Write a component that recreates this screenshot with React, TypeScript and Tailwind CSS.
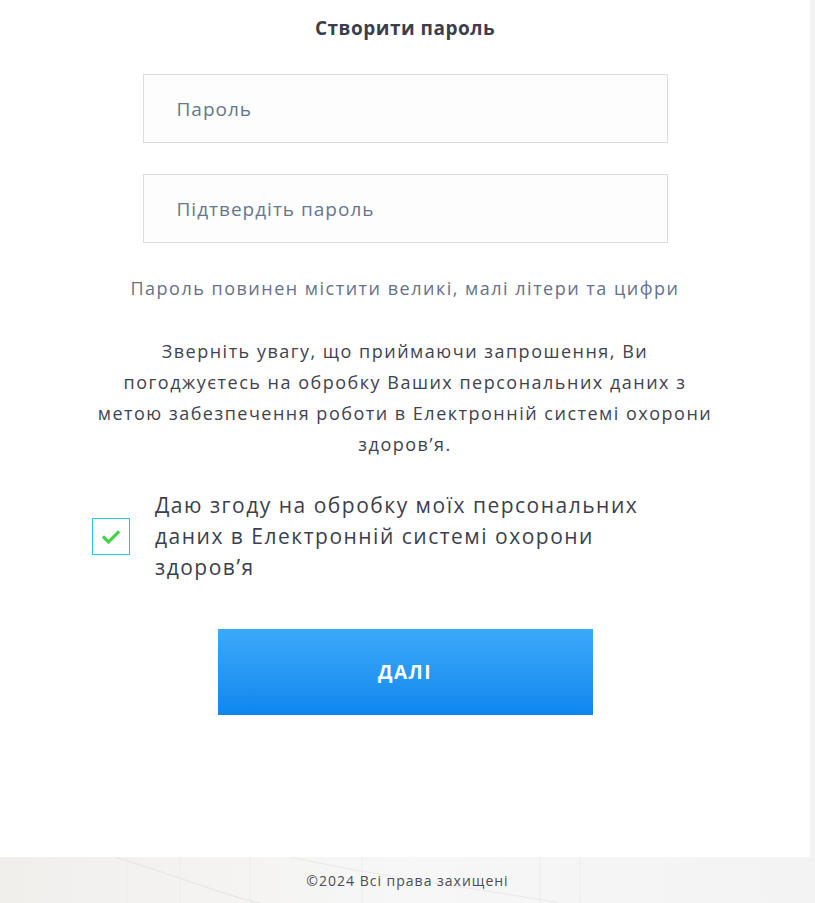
import { useState } from 'react';

const font = { fontFamily: '"Open Sans", Lato, sans-serif' };

function CheckIcon() {
  return (
    <svg width="18" height="14" viewBox="0 0 18 14" fill="none" aria-hidden="true">
      <path d="M2 7.5l4.5 4.5L16 2.5" stroke="#46d24b" strokeWidth="3.2" strokeLinecap="square" />
    </svg>
  );
}

export default function App() {
  const [agreed, setAgreed] = useState(true);

  return (
    <div className="flex min-h-[903px] w-[815px] flex-col bg-[#f3f3f3]" style={font}>
      {/* Картка форми */}
      <div className="flex h-[857px] w-[810px] flex-col items-center bg-white">
        <h1 className="mt-[16px] text-[19px] font-bold leading-[24px] tracking-[0.5px] text-[#3b3f4c]">
          Створити пароль
        </h1>

        <div className="mt-[34px] flex w-[525px] flex-col gap-[31px]">
          <input
            type="password"
            placeholder="Пароль"
            className="h-[69px] w-full border border-[#dcdcdc] bg-[#fdfdfd] px-[33px] text-[19px] tracking-[1px] text-[#3b3f4c] outline-none placeholder:text-[#66768c]"
          />
          <input
            type="password"
            placeholder="Підтвердіть пароль"
            className="h-[69px] w-full border border-[#dcdcdc] bg-[#fdfdfd] px-[33px] text-[19px] tracking-[1px] text-[#3b3f4c] outline-none placeholder:text-[#66768c]"
          />
        </div>

        <p className="mt-[33px] text-[18px] leading-[24px] tracking-[1.5px] text-[#66718a]">
          Пароль повинен містити великі, малі літери та цифри
        </p>

        <p className="mt-[36px] w-[640px] text-center text-[18px] leading-[31px] tracking-[1.5px] text-[#3f4250]">
          Зверніть увагу, що приймаючи запрошення, Ви
          <br />
          погоджуєтесь на обробку Ваших персональних даних з
          <br />
          метою забезпечення роботи в Електронній системі охорони
          <br />
          здоров’я.
        </p>

        <label className="mt-[30px] flex w-[626px] cursor-pointer items-center gap-[25px]">
          <button
            type="button"
            onClick={() => setAgreed(!agreed)}
            className="flex h-[37px] w-[38px] shrink-0 items-center justify-center border border-[#22c9e6] bg-white"
          >
            {agreed && <CheckIcon />}
          </button>
          <span className="w-[515px] text-[21px] leading-[31px] tracking-[1.5px] text-[#3b3f4c]">
            Даю згоду на обробку моїх персональних даних в Електронній системі охорони здоров’я
          </span>
        </label>

        <button
          type="button"
          className="mt-[46px] h-[86px] w-[375px] bg-gradient-to-b from-[#3ba9f9] to-[#0c87ee] text-[19px] font-bold tracking-[1.5px] text-white"
        >
          ДАЛІ
        </button>
      </div>

      {/* Футер */}
      <footer className="relative flex h-[46px] items-center justify-center overflow-hidden bg-gradient-to-r from-[#f1efec] via-[#f7f7f7] to-[#f3f3f3]">
        <svg className="absolute inset-0" width="815" height="46" viewBox="0 0 815 46" fill="none" aria-hidden="true">
          <path d="M115 0C180 20 230 40 260 46" stroke="#e4e4e4" strokeWidth="1" />
          <path d="M290 0C380 20 470 30 560 46" stroke="#e8e8e8" strokeWidth="1" />
          <path d="M127 0v46M180 0v46M250 0v46M362 0v46M540 0v46M580 0v46" stroke="#ececec" strokeWidth="1" />
        </svg>
        <span className="relative text-[14px] tracking-[1px] text-[#4a4d57]">©2024 Всі права захищені</span>
      </footer>
    </div>
  );
}
